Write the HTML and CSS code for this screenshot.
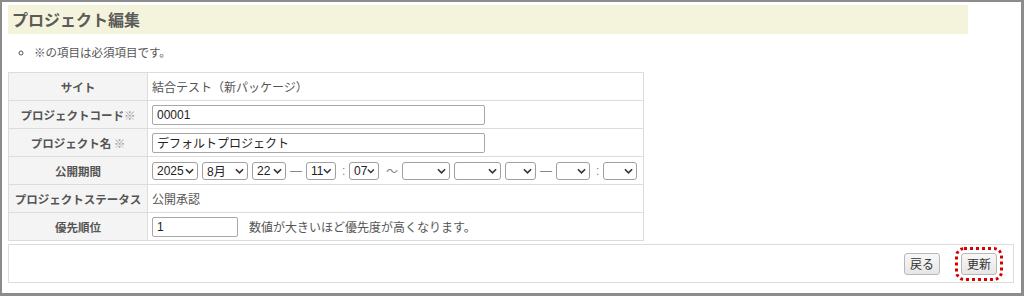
FILE: index.html
```html
<!DOCTYPE html>
<html lang="ja">
<head>
    <meta charset="UTF-8">
    <meta name="viewport" content="width=device-width, initial-scale=1.0">
    <title>プロジェクト編集</title>
    <link rel="stylesheet" href="styles.css">
</head>
<body>
    <div class="frame">
        <h1 class="page-title">プロジェクト編集</h1>

        <ul class="notes">
            <li>※の項目は必須項目です。</li>
        </ul>

        <table class="form-table">
            <colgroup>
                <col class="label-col">
                <col>
            </colgroup>
            <tr>
                <th>サイト</th>
                <td>結合テスト（新パッケージ）</td>
            </tr>
            <tr>
                <th>プロジェクトコード<span class="req">※</span></th>
                <td><input class="text-input wide" type="text" value="00001"></td>
            </tr>
            <tr>
                <th>プロジェクト名 <span class="req">※</span></th>
                <td><input class="text-input wide" type="text" value="デフォルトプロジェクト"></td>
            </tr>
            <tr>
                <th>公開期間</th>
                <td>
                    <div class="period">
                        <span class="sel w46">2025<svg viewBox="0 0 10 6" width="9" height="6"><path d="M1 1l4 4 4-4" fill="none" stroke="#333" stroke-width="1.8"/></svg></span>
                        <span class="sel w46">8月<svg viewBox="0 0 10 6" width="9" height="6"><path d="M1 1l4 4 4-4" fill="none" stroke="#333" stroke-width="1.8"/></svg></span>
                        <span class="sel w34">22<svg viewBox="0 0 10 6" width="9" height="6"><path d="M1 1l4 4 4-4" fill="none" stroke="#333" stroke-width="1.8"/></svg></span>
                        <span class="sep dash">—</span>
                        <span class="sel w30">11<svg viewBox="0 0 10 6" width="9" height="6"><path d="M1 1l4 4 4-4" fill="none" stroke="#333" stroke-width="1.8"/></svg></span>
                        <span class="sep colon">:</span>
                        <span class="sel w30">07<svg viewBox="0 0 10 6" width="9" height="6"><path d="M1 1l4 4 4-4" fill="none" stroke="#333" stroke-width="1.8"/></svg></span>
                        <span class="sep tilde">〜</span>
                        <span class="sel w48"><svg viewBox="0 0 10 6" width="9" height="6"><path d="M1 1l4 4 4-4" fill="none" stroke="#333" stroke-width="1.8"/></svg></span>
                        <span class="sel w47"><svg viewBox="0 0 10 6" width="9" height="6"><path d="M1 1l4 4 4-4" fill="none" stroke="#333" stroke-width="1.8"/></svg></span>
                        <span class="sel w31"><svg viewBox="0 0 10 6" width="9" height="6"><path d="M1 1l4 4 4-4" fill="none" stroke="#333" stroke-width="1.8"/></svg></span>
                        <span class="sep dash">—</span>
                        <span class="sel w34"><svg viewBox="0 0 10 6" width="9" height="6"><path d="M1 1l4 4 4-4" fill="none" stroke="#333" stroke-width="1.8"/></svg></span>
                        <span class="sep colon">:</span>
                        <span class="sel w34"><svg viewBox="0 0 10 6" width="9" height="6"><path d="M1 1l4 4 4-4" fill="none" stroke="#333" stroke-width="1.8"/></svg></span>
                    </div>
                </td>
            </tr>
            <tr>
                <th>プロジェクトステータス</th>
                <td>公開承認</td>
            </tr>
            <tr>
                <th>優先順位</th>
                <td><input class="text-input short" type="text" value="1"><span class="hint">数値が大きいほど優先度が高くなります。</span></td>
            </tr>
        </table>

        <div class="actions">
            <button class="btn" type="button">戻る</button>
            <button class="btn marked" type="button">更新</button>
        </div>
    </div>
</body>
</html>
```

FILE: styles.css
```css
:root {
    --text: #555555;
    --line: #dcdcdc;
    --label-bg: #f4f4f4;
    --title-bg: #f4f4dc;
}

* {
    box-sizing: border-box;
}

body {
    margin: 0;
    background: #ffffff;
    font-family: "Noto Sans CJK JP", "Liberation Sans", sans-serif;
    font-size: 12px;
    color: var(--text);
}

.frame {
    width: 1024px;
    height: 296px;
    border: solid #8c8c8c;
    border-width: 2px 3px 3px 2px;
    padding: 3px 7px 0 6px;
    background: #ffffff;
}

.page-title {
    margin: 0;
    width: 960px;
    height: 29px;
    padding-left: 4px;
    line-height: 29px;
    font-size: 16px;
    font-weight: bold;
    color: #5a5a5a;
    background: var(--title-bg);
}

.notes {
    margin: 10px 0 0;
    padding-left: 26px;
    list-style: circle;
    line-height: 16px;
    font-size: 11.5px;
}

.form-table {
    margin-top: 12px;
    width: 636px;
    border-collapse: collapse;
    table-layout: fixed;
}

.label-col {
    width: 139px;
}

.form-table th,
.form-table td {
    height: 28px;
    border: 1px solid var(--line);
    padding: 0 4px;
    vertical-align: middle;
    white-space: nowrap;
}

.form-table th {
    padding: 0;
    text-align: center;
    font-weight: bold;
    font-size: 11.5px;
    background: var(--label-bg);
}

.req {
    color: #999999;
    font-weight: normal;
}

.text-input {
    height: 20px;
    padding: 0 4px;
    border: 1px solid #a8a8a8;
    border-radius: 2px;
    font-family: "Liberation Sans", "Noto Sans CJK JP", sans-serif;
    font-size: 12px;
    color: #222222;
    vertical-align: middle;
}

.text-input.wide {
    width: 333px;
}

.text-input.short {
    width: 86px;
}

.hint {
    margin-left: 11px;
    vertical-align: middle;
}

.period {
    display: flex;
    align-items: center;
    gap: 4px;
}

.sel {
    display: inline-flex;
    flex: none;
    align-items: center;
    height: 18px;
    padding: 0 3px 0 4px;
    border: 1px solid #a0a0a0;
    border-radius: 3px;
    font-family: "Liberation Sans", "Noto Sans CJK JP", sans-serif;
    font-size: 12px;
    color: #222222;
}

.sel svg {
    margin-left: auto;
}

.w30 { width: 30px; }
.w31 { width: 31px; }
.w34 { width: 34px; }
.w46 { width: 46px; }
.w47 { width: 47px; }
.w48 { width: 48px; }

.sep {
    flex: none;
    font-family: "Liberation Sans", sans-serif;
    color: #888888;
}

.dash {
    width: 12px;
    text-align: center;
}

.colon {
    width: 3px;
    margin-left: 2px;
}

.tilde {
    width: 12px;
    margin-left: 3px;
    font-family: "Noto Sans CJK JP", sans-serif;
}

.actions {
    display: flex;
    justify-content: flex-end;
    align-items: center;
    gap: 21px;
    margin-top: 3px;
    height: 39px;
    padding-right: 16px;
    border: 1px solid var(--line);
}

.btn {
    height: 22px;
    padding: 0 5px;
    border: 1px solid #b8b8b8;
    border-radius: 3px;
    background: linear-gradient(#f8f8f8, #e6e6e6);
    font-family: "Noto Sans CJK JP", sans-serif;
    font-size: 12px;
    color: #333333;
}

.btn.marked {
    outline: 3px dotted #d40000;
    outline-offset: 3px;
}
```
